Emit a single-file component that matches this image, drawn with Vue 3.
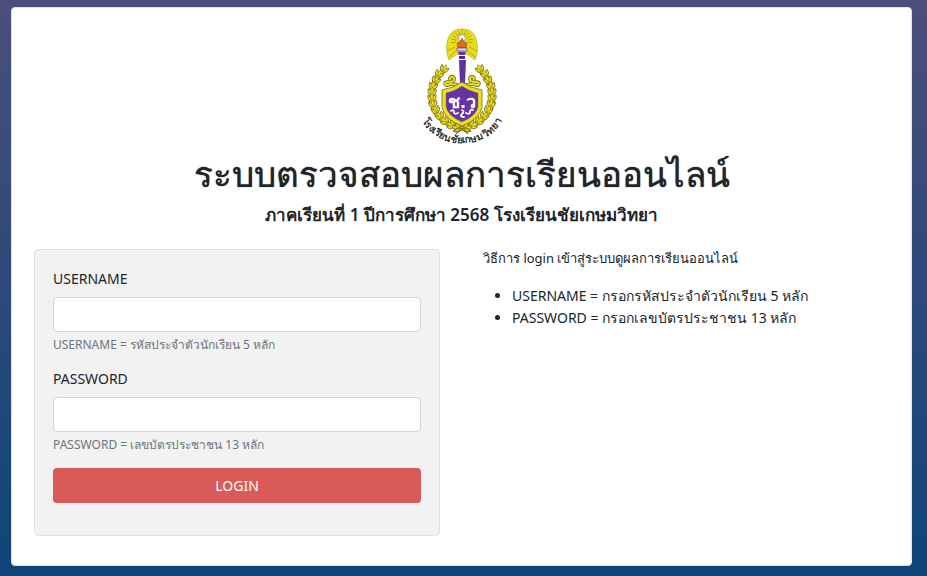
<template>
    <main class="page">
        <section class="card">
            <header class="heading">
                <svg class="logo" viewBox="0 0 84 120" role="img" aria-label="โรงเรียนชัยเกษมวิทยา">
                    <!-- Rayos -->
                    <path d="M29 32C26 25 26 16 28 11 30 4 35 1 42 1s12 3 14 10c2 5 2 14-1 21L47 26H37Z" fill="#e9dc1b" stroke="#b8aa20" stroke-width=".7" />
                    <path v-for="a in rayos" :key="a" d="M42 7V2" stroke="#938418" stroke-width=".6" :transform="`rotate(${a} 42 13)`" />
                    <path d="M36 23l-7 6M35 19l-8 4M48 23l7 6M49 19l8 4" stroke="#938418" stroke-width=".6" />
                    <circle cx="42" cy="10" r="3.5" fill="#fff" stroke="#777" stroke-width=".7" />
                    <path d="M38 20l-1-5 3-1 2-4 2 4 3 1-1 5Z" fill="#df681d" stroke="#963e22" stroke-width=".5" />
                    <path d="M37 20h10v3H37Z" fill="#ddd4ec" stroke="#57406f" stroke-width=".7" />
                    <path d="M38 24h8l-1 3h-6ZM39 28h6v3h-6ZM39 32h7l-1 24h-5Z" fill="#6131a1" />
                    <path d="M39 29h6" stroke="#342347" />

                    <!-- Corona de hojas, una mitad y su reflejo -->
                    <g v-for="lado in lados" :key="lado" :transform="lado">
                        <path d="M24 42Q11 54 11 68 12 94 42 101" fill="none" stroke="#807618" stroke-width="5" />
                        <path d="M24 42Q11 54 11 68 12 94 42 101" fill="none" stroke="#e7d71b" stroke-width="3" />
                        <g v-for="(h, i) in hojas" :key="i" :transform="`translate(${h.x} ${h.y}) rotate(${h.a})`">
                            <path d="M0 3Q-5 3-4-3-1-2 0 1 1-2 4-3 5 3 0 3Z" fill="#e7d71b" stroke="#686219" stroke-width=".7" />
                            <path d="M0 2Q-3-1 0-5 3-1 0 2Z" fill="#eee025" stroke="#81781b" stroke-width=".5" />
                        </g>
                        <path d="M42 101q-5-3-8 2 4 3 8-2l-6 5" fill="none" stroke="#746a19" stroke-width="1" />
                        <path d="M37 57c-4-1-6-2-9 0-3 1-4-2-1-3 4-1 7 1 7-3 0-3-4-3-4 0" fill="none" stroke="#665d1a" stroke-width="3.6" stroke-linecap="round" />
                        <path d="M37 57c-4-1-6-2-9 0-3 1-4-2-1-3 4-1 7 1 7-3 0-3-4-3-4 0" fill="none" stroke="#eadc1c" stroke-width="2.2" stroke-linecap="round" />
                    </g>

                    <!-- Escudo -->
                    <path d="M42 54q8 6 20 8v17q-2 12-20 19-18-7-20-19V62q12-2 20-8Z" fill="#eee01b" stroke="#766b19" stroke-width=".8" />
                    <path d="M42 58q7 5 16 7v14q-2 9-16 15-14-6-16-15V65q9-2 16-7Z" fill="#6532a8" stroke="#8b7a28" stroke-width=".5" />
                    <text class="monogram" x="42" y="80" text-anchor="middle">ช.ว</text>
                    <path d="M31 83q3-2 3 1t4 1M42 82q3 1 0 4t2 3M53 82q-3-1-3 2t-4 1" fill="none" stroke="#fff" stroke-width="1.8" stroke-linecap="round" />

                    <path id="logo-arc" d="M-2 85A47 47 0 0 0 86 85" fill="none" />
                    <text class="school" text-anchor="middle">
                        <textPath href="#logo-arc" startOffset="50%">โรงเรียนชัยเกษมวิทยา</textPath>
                    </text>
                </svg>
                <h1>ระบบตรวจสอบผลการเรียนออนไลน์</h1>
                <h2>ภาคเรียนที่ 1 ปีการศึกษา 2568 โรงเรียนชัยเกษมวิทยา</h2>
            </header>

            <div class="columns">
                <form class="login" @submit.prevent>
                    <div class="field">
                        <label for="username">USERNAME</label>
                        <input id="username" v-model="username" type="text" aria-describedby="username-help" />
                        <small id="username-help">USERNAME = รหัสประจำตัวนักเรียน 5 หลัก</small>
                    </div>
                    <div class="field">
                        <label for="password">PASSWORD</label>
                        <input id="password" v-model="password" type="password" aria-describedby="password-help" />
                        <small id="password-help">PASSWORD = เลขบัตรประชาชน 13 หลัก</small>
                    </div>
                    <button type="submit">LOGIN</button>
                </form>

                <section class="guide">
                    <p>วิธีการ login เข้าสู่ระบบดูผลการเรียนออนไลน์</p>
                    <ul>
                        <li>USERNAME = กรอกรหัสประจำตัวนักเรียน 5 หลัก</li>
                        <li>PASSWORD = กรอกเลขบัตรประชาชน 13 หลัก</li>
                    </ul>
                </section>
            </div>
        </section>
    </main>
</template>

<script setup>
    import { ref } from 'vue'

    const username = ref('')
    const password = ref('')

    // Partes repetidas del emblema
    const rayos = [-100, -80, -60, -40, -20, 0, 20, 40, 60, 80, 100]
    const lados = ['translate(0 0)', 'translate(84 0) scale(-1 1)']
    const hojas = [
        { x: 24, y: 41, a: 30 },
        { x: 19, y: 46, a: 35 },
        { x: 16, y: 52, a: 25 },
        { x: 13, y: 58, a: 15 },
        { x: 12, y: 64, a: 5 },
        { x: 12, y: 70, a: -5 },
        { x: 13, y: 76, a: -15 },
        { x: 16, y: 82, a: -30 },
        { x: 20, y: 88, a: -40 },
        { x: 25, y: 93, a: -50 },
        { x: 31, y: 97, a: -60 },
        { x: 37, y: 100, a: -75 }
    ]
</script>

<style>
    body {
    margin: 0;
    }
</style>

<style scoped>
    .page {
    box-sizing: border-box;
    min-height: 100vh;
    padding: 7px 15px 10px 11px;
    background: linear-gradient(#4b4e7b, #0e4579);
    color: #212529;
    font-family: "Noto Sans", "Open Sans", sans-serif;
    font-size: 14px;
    line-height: 22px;
    }

    .card {
    padding: 20px 22px 29px;
    background: #fff;
    border: 1px solid #dee2e6;
    border-radius: 4px;
    }

    .heading {
    text-align: center;
    }

    .logo {
    display: block;
    width: 84px;
    height: 120px;
    margin: 0 auto;
    overflow: visible;
    }

    .monogram {
    fill: #fff;
    font-size: 18px;
    font-weight: 700;
    }

    .school {
    fill: #333;
    font-size: 10px;
    font-weight: 700;
    }

    h1 {
    margin: 4px 0 8px;
    font-size: 35px;
    font-weight: 500;
    line-height: 44px;
    text-shadow: 0 0 1px currentColor;
    }

    h2 {
    margin: 0 0 24px;
    font-size: 17px;
    font-weight: 600;
    line-height: 21px;
    }

    .columns {
    display: grid;
    grid-template-columns: 1fr 1fr;
    gap: 43px;
    }

    .login {
    padding: 18px 18px 32px;
    background: #f2f2f2;
    border: 1px solid #dee2e6;
    border-radius: 4px;
    }

    .field {
    display: flex;
    flex-direction: column;
    margin-bottom: 14px;
    }

    label {
    margin-bottom: 7px;
    }

    input {
    box-sizing: border-box;
    width: 100%;
    height: 35px;
    padding: 6px 12px;
    background: #fff;
    border: 1px solid #ced4da;
    border-radius: 4px;
    font: inherit;
    }

    small {
    margin-top: 3px;
    color: #6c757d;
    font-size: 12px;
    line-height: 19px;
    }

    button {
    width: 100%;
    height: 35px;
    padding: 0;
    background: #d95b59;
    border: 0;
    border-radius: 4px;
    color: #fff;
    font: inherit;
    cursor: pointer;
    }

    .guide p {
    margin: 0;
    font-size: 13px;
    line-height: 18px;
    }

    ul {
    margin: 18px 0 0;
    padding-left: 29px;
    }
</style>
